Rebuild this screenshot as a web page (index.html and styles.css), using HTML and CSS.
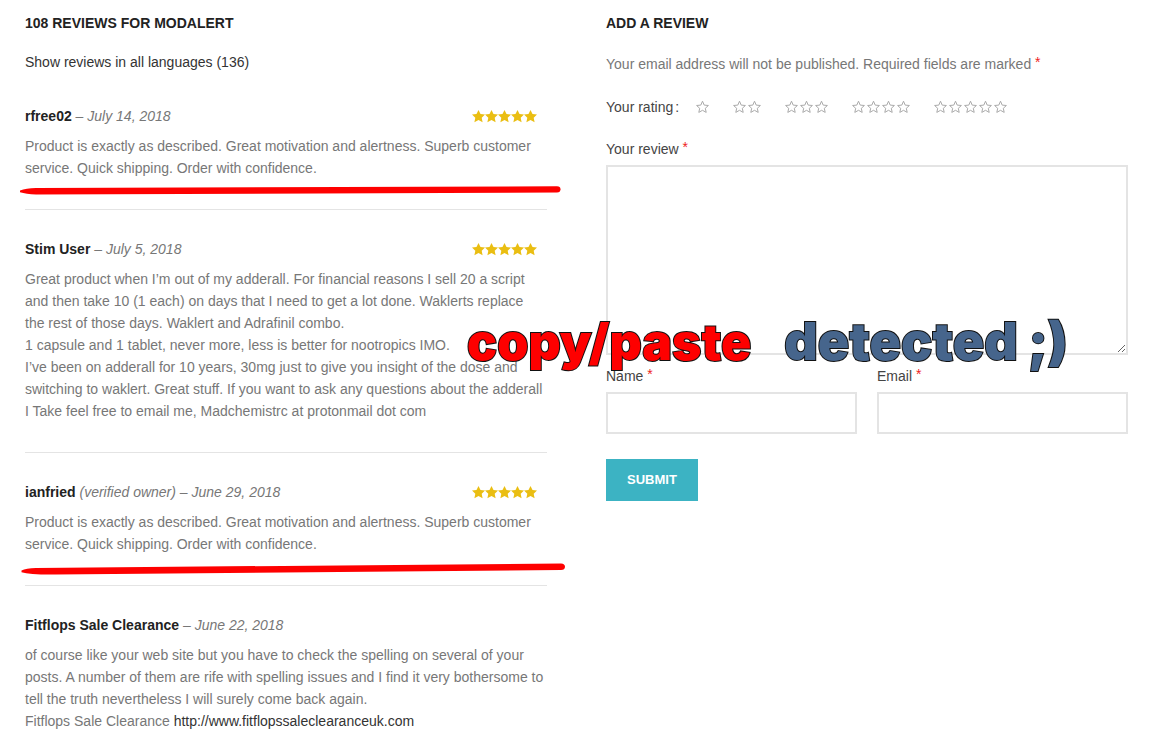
FILE: index.html
```html
<!DOCTYPE html>
<html lang="en">
<head>
    <meta charset="UTF-8">
    <meta name="viewport" content="width=device-width, initial-scale=1.0">
    <title>Modalert reviews</title>
    <link rel="stylesheet" href="styles.css">
</head>
<body>
    <svg class="sprite" aria-hidden="true">
        <symbol id="star" viewBox="0 0 13 13">
            <path d="M6.5 0 L8.5 4.1 L13 4.6 L9.7 7.7 L10.6 12.3 L6.5 10 L2.4 12.3 L3.3 7.7 L0 4.6 L4.5 4.1 Z"/>
        </symbol>
        <symbol id="star-empty" viewBox="0 0 15 15">
            <path d="M7.5 1.2 L9.2 5.1 L13.4 5.5 L10.3 8.3 L11.2 12.4 L7.5 10.3 L3.8 12.4 L4.7 8.3 L1.6 5.5 L5.8 5.1 Z"/>
        </symbol>
    </svg>

    <div class="page">
        <section class="reviews">
            <h2>108 reviews for Modalert</h2>
            <p class="all-languages"><a href="#">Show reviews in all languages (136)</a></p>

            <ol class="review-list">
                <li class="review">
                    <div class="review-head">
                        <p class="meta"><strong>rfree02</strong> – <time>July 14, 2018</time></p>
                        <div class="rating" role="img" aria-label="5 out of 5">
                            <svg><use href="#star"/></svg><svg><use href="#star"/></svg><svg><use href="#star"/></svg><svg><use href="#star"/></svg><svg><use href="#star"/></svg>
                        </div>
                    </div>
                    <p class="review-text">Product is exactly as described. Great motivation and alertness. Superb customer service. Quick shipping. Order with confidence.</p>
                    <svg class="marker" viewBox="0 0 546 14" preserveAspectRatio="none" aria-hidden="true">
                        <path d="M0 4.5 Q6 2.4 16 2 L537 0.3 Q540.5 0.5 540.5 3.3 Q540.5 6.4 537 6.6 L16 8.4 Q6 8 0 6.2 Z"/>
                    </svg>
                </li>
                <li class="review">
                    <div class="review-head">
                        <p class="meta"><strong>Stim User</strong> – <time>July 5, 2018</time></p>
                        <div class="rating" role="img" aria-label="5 out of 5">
                            <svg><use href="#star"/></svg><svg><use href="#star"/></svg><svg><use href="#star"/></svg><svg><use href="#star"/></svg><svg><use href="#star"/></svg>
                        </div>
                    </div>
                    <p class="review-text">Great product when I’m out of my adderall. For financial reasons I sell 20 a script and then take 10 (1 each) on days that I need to get a lot done. Waklerts replace the rest of those days. Waklert and Adrafinil combo.<br>
                    1 capsule and 1 tablet, never more, less is better for nootropics IMO.<br>
                    I’ve been on adderall for 10 years, 30mg just to give you insight of the dose and switching to waklert. Great stuff. If you want to ask any questions about the adderall I Take feel free to email me, Madchemistrc at protonmail dot com</p>
                </li>
                <li class="review">
                    <div class="review-head">
                        <p class="meta"><strong>ianfried</strong> <em>(verified owner)</em> – <time>June 29, 2018</time></p>
                        <div class="rating" role="img" aria-label="5 out of 5">
                            <svg><use href="#star"/></svg><svg><use href="#star"/></svg><svg><use href="#star"/></svg><svg><use href="#star"/></svg><svg><use href="#star"/></svg>
                        </div>
                    </div>
                    <p class="review-text">Product is exactly as described. Great motivation and alertness. Superb customer service. Quick shipping. Order with confidence.</p>
                    <svg class="marker" viewBox="0 0 546 14" preserveAspectRatio="none" aria-hidden="true">
                        <path d="M1.5 8.4 Q6 6.4 16 6 L541 1.5 Q545 1.8 545 4.8 Q545 7.9 541 8.1 L36 12.5 Q10 12.8 1.5 10.2 Z"/>
                    </svg>
                </li>
                <li class="review">
                    <div class="review-head">
                        <p class="meta"><strong>Fitflops Sale Clearance</strong> – <time>June 22, 2018</time></p>
                    </div>
                    <p class="review-text">of course like your web site but you have to check the spelling on several of your posts. A number of them are rife with spelling issues and I find it very bothersome to tell the truth nevertheless I will surely come back again.<br>
                    Fitflops Sale Clearance <a href="#">http://www.fitflopssaleclearanceuk.com</a></p>
                </li>
            </ol>
        </section>

        <section class="add-review">
            <h2>Add a review</h2>
            <p class="note">Your email address will not be published. Required fields are marked <span class="required">*</span></p>

            <form>
                <div class="your-rating" role="radiogroup" aria-labelledby="rating-label">
                    <span id="rating-label" class="rating-label">Your rating<span>:</span></span>
                    <label><input type="radio" name="rating" value="1" aria-label="1 star"><svg><use href="#star-empty"/></svg></label>
                    <label><input type="radio" name="rating" value="2" aria-label="2 stars"><svg><use href="#star-empty"/></svg><svg><use href="#star-empty"/></svg></label>
                    <label><input type="radio" name="rating" value="3" aria-label="3 stars"><svg><use href="#star-empty"/></svg><svg><use href="#star-empty"/></svg><svg><use href="#star-empty"/></svg></label>
                    <label><input type="radio" name="rating" value="4" aria-label="4 stars"><svg><use href="#star-empty"/></svg><svg><use href="#star-empty"/></svg><svg><use href="#star-empty"/></svg><svg><use href="#star-empty"/></svg></label>
                    <label><input type="radio" name="rating" value="5" aria-label="5 stars"><svg><use href="#star-empty"/></svg><svg><use href="#star-empty"/></svg><svg><use href="#star-empty"/></svg><svg><use href="#star-empty"/></svg><svg><use href="#star-empty"/></svg></label>
                </div>

                <div class="field">
                    <label for="comment">Your review <span class="required">*</span></label>
                    <textarea id="comment" name="comment" required></textarea>
                </div>

                <div class="field-row">
                    <div class="field">
                        <label for="author">Name <span class="required">*</span></label>
                        <input type="text" id="author" name="author" required>
                    </div>
                    <div class="field">
                        <label for="email">Email <span class="required">*</span></label>
                        <input type="email" id="email" name="email" required>
                    </div>
                </div>

                <button type="submit" class="submit">Submit</button>
            </form>
        </section>

        <p class="caption"><span class="caption-red">copy/paste</span><span class="caption-blue">detected ;)</span></p>
    </div>
</body>
</html>
```
FILE: styles.css
```css
* {
    margin: 0;
    padding: 0;
    box-sizing: border-box;
}

body {
    background: #fff;
    color: #777;
    font-family: "Liberation Sans", Arial, sans-serif;
    font-size: 14px;
    line-height: 22px;
}

a {
    color: #333;
    text-decoration: none;
}

.sprite {
    display: none;
}

.page {
    position: relative;
    display: grid;
    grid-template-columns: 1fr 1fr;
    gap: 59px;
    padding: 12px 23px 0 25px;
}

h2 {
    color: #222;
    font-size: 14px;
    font-weight: bold;
    line-height: 22px;
    text-transform: uppercase;
}

/* Reviews */

.all-languages {
    margin: 17px 0 32px;
}

.review-list {
    list-style: none;
}

.review {
    position: relative;
    margin-bottom: 28px;
    padding-bottom: 30px;
    border-bottom: 1px solid #e4e4e4;
}

.review:last-child {
    margin-bottom: 0;
    padding-bottom: 0;
    border-bottom: none;
}

.review-head {
    display: flex;
    justify-content: space-between;
    align-items: center;
    margin-bottom: 8px;
    padding-right: 10px;
}

.review-text {
    padding-right: 2px;
}

.meta strong {
    color: #222;
}

.meta time {
    font-style: italic;
}

.rating {
    display: flex;
}

.rating svg {
    width: 13px;
    height: 13px;
    fill: #eabe12;
}

.marker {
    position: absolute;
    left: -5px;
    bottom: 9px;
    width: calc(100% + 24px);
    height: 14px;
    fill: #fe0000;
}

/* Form */

.note {
    margin: 19px 0 21px;
}

.required {
    color: #e22;
    vertical-align: 2px;
    line-height: 1;
}

.your-rating {
    display: flex;
    align-items: center;
    gap: 22px;
    margin-bottom: 20px;
    color: #444;
}

.rating-label {
    display: flex;
    gap: 2px;
    margin-right: -6px;
}

.your-rating label {
    position: relative;
    display: flex;
    cursor: pointer;
}

.your-rating input {
    position: absolute;
    inset: 0;
    opacity: 0;
}

.your-rating svg {
    width: 15px;
    height: 15px;
    fill: none;
    stroke: #aaa;
}

.field {
    flex: 1;
}

.field label {
    display: block;
    margin-bottom: 5px;
    color: #444;
}

.field input,
.field textarea {
    display: block;
    width: 100%;
    height: 42px;
    padding: 8px 12px;
    border: 2px solid #e4e4e4;
    background: #fff;
    color: #444;
    font: inherit;
}

.field textarea {
    height: 190px;
    resize: vertical;
}

.field-row {
    display: flex;
    gap: 20px;
    margin: 10px 0 25px;
}

.submit {
    height: 42px;
    padding: 0 21px;
    border: none;
    background: #3cb3c3;
    color: #fff;
    font: inherit;
    font-size: 13px;
    font-weight: bold;
    text-transform: uppercase;
    cursor: pointer;
}

/* Caption laid over both columns */

.caption {
    position: absolute;
    top: 314px;
    left: 467px;
    display: flex;
    align-items: baseline;
    gap: 33px;
    font-family: "Arial Black", Inter, sans-serif;
    font-size: 50px;
    font-weight: 900;
    line-height: 56px;
    white-space: nowrap;
    pointer-events: none;
    -webkit-text-stroke: 2px #111;
    paint-order: stroke fill;
}

.caption-red {
    color: #fe0000;
}

.caption-blue {
    color: #46658c;
    font-size: 52px;
}
```
